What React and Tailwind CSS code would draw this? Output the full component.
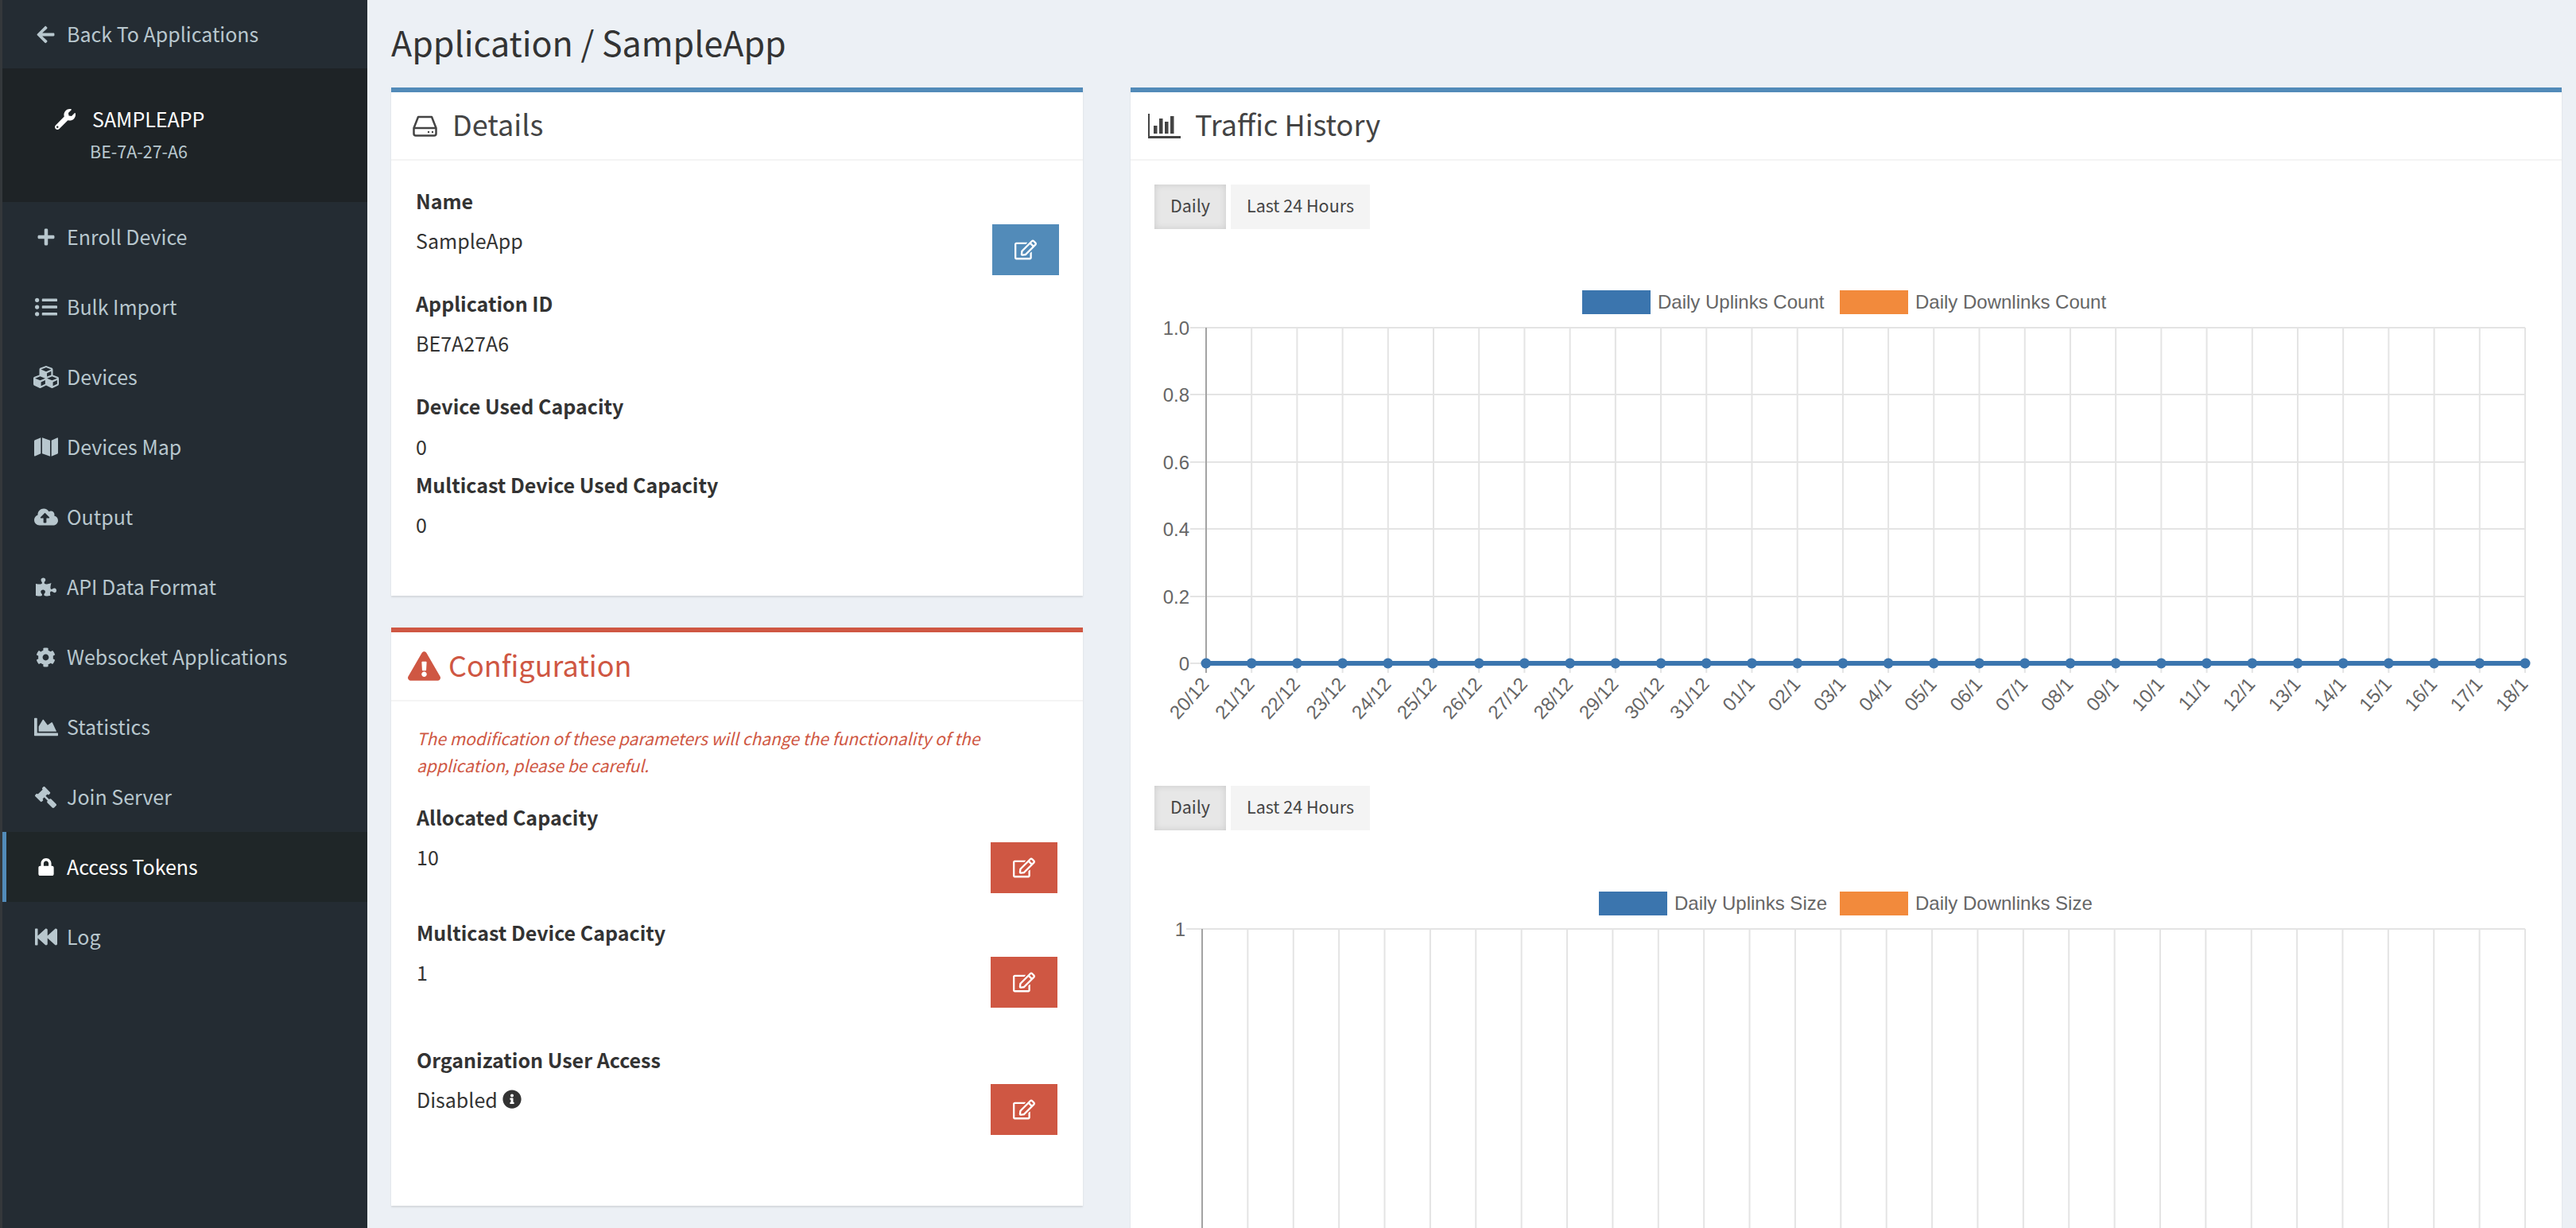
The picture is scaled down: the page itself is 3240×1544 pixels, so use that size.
import {
  FaArrowLeft,
  FaChartArea,
  FaCloudUploadAlt,
  FaCog,
  FaCubes,
  FaExclamationTriangle,
  FaFastBackward,
  FaGavel,
  FaInfoCircle,
  FaListUl,
  FaLock,
  FaMap,
  FaPlus,
  FaPuzzlePiece,
  FaRegEdit,
  FaWrench
} from "react-icons/fa";

const NAV_ITEMS = [
  { label: "Enroll Device", icon: FaPlus, size: 24 },
  { label: "Bulk Import", icon: FaListUl, size: 28 },
  { label: "Devices", icon: FaCubes, size: 32 },
  { label: "Devices Map", icon: FaMap, size: 30 },
  { label: "Output", icon: FaCloudUploadAlt, size: 30 },
  { label: "API Data Format", icon: FaPuzzlePiece, size: 26 },
  { label: "Websocket Applications", icon: FaCog, size: 25 },
  { label: "Statistics", icon: FaChartArea, size: 30 },
  { label: "Join Server", icon: FaGavel, size: 27, flip: true },
  { label: "Access Tokens", icon: FaLock, size: 22, active: true },
  { label: "Log", icon: FaFastBackward, size: 28 }
];

const DATES = [
  "20/12", "21/12", "22/12", "23/12", "24/12", "25/12", "26/12", "27/12", "28/12", "29/12",
  "30/12", "31/12", "01/1", "02/1", "03/1", "04/1", "05/1", "06/1", "07/1", "08/1",
  "09/1", "10/1", "11/1", "12/1", "13/1", "14/1", "15/1", "16/1", "17/1", "18/1"
];

function NavItem({ item }) {
  const Icon = item.icon;
  return (
    <a
      className={
        item.active
          ? "flex h-[88px] items-center bg-[#1f2628] text-white shadow-[inset_5px_0_0_#528bb9]"
          : "flex h-[88px] items-center text-[#b8c7ce]"
      }
    >
      <span className="flex w-[81px] shrink-0 items-center justify-center pl-[28px]">
        <Icon className={item.flip ? "-scale-x-100" : ""} style={{ fontSize: item.size }} />
      </span>
      <span className="-mt-[2px] text-[25px] leading-10">{item.label}</span>
    </a>
  );
}

function Sidebar() {
  return (
    <aside className="h-full w-[462px] shrink-0 border-l-[3px] border-[#34383b] bg-[#242c33]">
      <a className="flex h-[86px] items-center text-[#b8c7ce]">
        <span className="flex w-[81px] shrink-0 items-center justify-center pl-[28px]">
          <FaArrowLeft className="text-[25px]" />
        </span>
        <span className="-mt-[2px] text-[25px] leading-10">Back To Applications</span>
      </a>
      <div className="h-[168px] bg-[#1e2326] pt-[44px]">
        <div className="flex h-10 items-center text-white">
          <FaWrench className="ml-[66px] text-[26px]" />
          <span className="-mt-[2px] ml-[21px] text-[25px] leading-10">SAMPLEAPP</span>
        </div>
        <div className="ml-[110px] text-[21.5px] leading-10 text-[#b8c7ce]">BE-7A-27-A6</div>
      </div>
      <nav>
        {NAV_ITEMS.map((item) => (
          <NavItem key={item.label} item={item} />
        ))}
      </nav>
    </aside>
  );
}

function DriveIcon() {
  return (
    <svg width="31" height="27" viewBox="0 0 31 27" fill="none" stroke="#444" strokeWidth="2.5">
      <path d="M7 2h17l5.5 14v7a2.5 2.5 0 0 1-2.5 2.5H4A2.5 2.5 0 0 1 1.5 23v-7z" strokeLinejoin="round" />
      <path d="M1.5 16h28" />
      <circle cx="20" cy="21" r="1.2" fill="#444" stroke="none" />
      <circle cx="25" cy="21" r="1.2" fill="#444" stroke="none" />
    </svg>
  );
}

function BarChartIcon() {
  return (
    <svg width="41" height="31" viewBox="0 0 41 31" fill="#444">
      <path d="M0 0h2v28h39v3H0z" />
      <rect x="7" y="15" width="4.5" height="10" />
      <rect x="14" y="6" width="4.5" height="19" />
      <rect x="21" y="10" width="4.5" height="15" />
      <rect x="28" y="3" width="4.5" height="22" />
    </svg>
  );
}

function EditButton({ className }) {
  return (
    <button className={`flex h-16 w-[84px] shrink-0 items-center justify-center text-[28px] text-white ${className}`}>
      <FaRegEdit />
    </button>
  );
}

function Field({ label, children, mb, button }) {
  return (
    <div className={`flex items-start justify-between ${mb}`}>
      <div>
        <div className="text-[25px] font-bold leading-10">{label}</div>
        <div className="mt-[10px] flex items-center text-[25px] leading-10">{children}</div>
      </div>
      {button}
    </div>
  );
}

function Card({ accent, children, className }) {
  return (
    <section className={`border-t-[6px] bg-white shadow-[0_2px_2px_rgba(0,0,0,0.1)] ${accent} ${className}`}>
      {children}
    </section>
  );
}

function DetailsCard() {
  return (
    <Card accent="border-[#528bb9]" className="w-[870px]">
      <header className="flex h-[86px] items-center border-b-2 border-[#f4f4f4] pl-[27px] text-[#444]">
        <DriveIcon />
        <h3 className="-mt-[6px] ml-[19px] text-[36px] leading-10">Details</h3>
      </header>
      <div className="pb-[70px] pl-[31px] pr-[30px] pt-[30px] text-[#333]">
        <Field
          label="Name"
          mb="mb-[15px]"
          button={<EditButton className="mt-[50px] bg-[#528bb9]" />}
        >
          SampleApp
        </Field>
        <div className="text-[25px] font-bold leading-10">Application ID</div>
        <div className="mb-[39px] mt-[10px] text-[25px] leading-10">BE7A27A6</div>
        <div className="text-[25px] font-bold leading-10">Device Used Capacity</div>
        <div className="mb-[8px] mt-[11px] text-[25px] leading-10">0</div>
        <div className="text-[25px] font-bold leading-10">Multicast Device Used Capacity</div>
        <div className="mt-[10px] text-[25px] leading-10">0</div>
      </div>
    </Card>
  );
}

function ConfigurationCard() {
  return (
    <Card accent="border-[#cf5743]" className="mt-10 w-[870px]">
      <header className="flex h-[87px] items-center border-b-2 border-[#f4f4f4] pl-[21px] text-[#cf5743]">
        <FaExclamationTriangle className="text-[41px]" />
        <h3 className="-mt-[6px] ml-[10px] text-[36px] leading-10">Configuration</h3>
      </header>
      <div className="pb-[89px] pl-[32px] pr-[32px] pt-[29px] text-[#333]">
        <p className="mb-[28px] whitespace-nowrap text-[21px] italic leading-[34px] text-[#cf5743]">
          The modification of these parameters will change the functionality of the
          <br />
          application, please be careful.
        </p>
        <Field
          label="Allocated Capacity"
          mb="mb-[29px]"
          button={<EditButton className="mt-[52px] bg-[#cf5743]" />}
        >
          10
        </Field>
        <Field
          label="Multicast Device Capacity"
          mb="mb-[45px]"
          button={<EditButton className="mt-[51px] bg-[#cf5743]" />}
        >
          1
        </Field>
        <Field
          label="Organization User Access"
          button={<EditButton className="mt-[51px] bg-[#cf5743]" />}
        >
          Disabled
          <FaInfoCircle className="ml-[6px] text-[24px]" />
        </Field>
      </div>
    </Card>
  );
}

function RangeTabs() {
  return (
    <div className="flex gap-[6px] pl-[30px] text-[21.5px] text-[#444]">
      <button className="flex h-14 w-[90px] items-center justify-center bg-[#e7e7e7] pb-[3px] shadow-[inset_0_0_8px_rgba(0,0,0,0.13)]">
        Daily
      </button>
      <button className="flex h-14 w-[175px] items-center justify-center bg-[#f4f4f4] pb-[3px]">Last 24 Hours</button>
    </div>
  );
}

function Chart({ left, height, legend, ticks, bottom, labels }) {
  const right = 1754;
  const step = (right - left) / 29;
  const top = 124;
  const xs = DATES.map((_, i) => left + i * step);
  const labelFont = { fontFamily: '"Liberation Sans", Arial, sans-serif' };

  return (
    <svg width="1800" height={height} viewBox={`0 0 1800 ${height}`} className="block" style={labelFont}>
      {legend.map((entry) => (
        <g key={entry.text}>
          <rect x={entry.x} y="77" width="86" height="30" fill={entry.color} />
          <text x={entry.x + 95} y="100" fontSize="24" fill="#666">
            {entry.text}
          </text>
        </g>
      ))}
      {ticks.map((tick) => (
        <g key={tick.label}>
          <line x1={left - 20} x2={right} y1={tick.y} y2={tick.y} stroke="#e4e4e4" strokeWidth="2" />
          <text x={left - 21} y={tick.y + 9} fontSize="24" fill="#666" textAnchor="end">
            {tick.label}
          </text>
        </g>
      ))}
      {xs.map((x, i) => (
        <line
          key={DATES[i]}
          x1={x}
          x2={x}
          y1={top}
          y2={bottom + 12}
          stroke={i === 0 ? "#a3a3a3" : "#e4e4e4"}
          strokeWidth="2"
        />
      ))}
      {labels && (
        <g>
          <line x1={left} x2={right} y1={bottom} y2={bottom} stroke="#3b75ae" strokeWidth="6" />
          {xs.map((x, i) => (
            <circle key={DATES[i]} cx={x} cy={bottom} r="6.5" fill="#3b75ae" />
          ))}
          {xs.map((x, i) => (
            <text
              key={DATES[i]}
              x={x + 5}
              y={bottom + 27}
              fontSize="24"
              fill="#666"
              textAnchor="end"
              transform={`rotate(-48 ${x + 5} ${bottom + 27})`}
            >
              {DATES[i]}
            </text>
          ))}
        </g>
      )}
    </svg>
  );
}

function TrafficCard() {
  return (
    <Card accent="border-[#528bb9]" className="w-[1800px] shrink-0">
      <header className="flex h-[86px] items-center border-b-2 border-[#f4f4f4] pl-[22px] text-[#444]">
        <BarChartIcon />
        <h3 className="-mt-[6px] ml-[18px] text-[36px] leading-10">Traffic History</h3>
      </header>
      <div className="pt-[30px]">
        <RangeTabs />
        <Chart
          left={95}
          height={700}
          bottom={546}
          labels
          ticks={[
            { label: "1.0", y: 124 },
            { label: "0.8", y: 208 },
            { label: "0.6", y: 293 },
            { label: "0.4", y: 377 },
            { label: "0.2", y: 462 },
            { label: "0", y: 546 }
          ]}
          legend={[
            { text: "Daily Uplinks Count", x: 568, color: "#3b75ae" },
            { text: "Daily Downlinks Count", x: 892, color: "#f28a3c" }
          ]}
        />
        <RangeTabs />
        <Chart
          left={90}
          height={560}
          bottom={560}
          ticks={[{ label: "1", y: 124 }]}
          legend={[
            { text: "Daily Uplinks Size", x: 589, color: "#3b75ae" },
            { text: "Daily Downlinks Size", x: 892, color: "#f28a3c" }
          ]}
        />
      </div>
    </Card>
  );
}

export default function App() {
  return (
    <div
      className="flex h-[1544px] w-[3240px] overflow-hidden bg-[#ecf0f5]"
      style={{ fontFamily: '"Noto Sans CJK SC", "Noto Sans", sans-serif' }}
    >
      <Sidebar />
      <main className="min-w-0 flex-1 px-[30px]">
        <h1 className="flex h-[110px] items-center pb-[6px] text-[43px] leading-[60px] text-[#333]">Application / SampleApp</h1>
        <div className="flex items-start gap-[60px]">
          <div className="shrink-0">
            <DetailsCard />
            <ConfigurationCard />
          </div>
          <TrafficCard />
        </div>
      </main>
    </div>
  );
}
